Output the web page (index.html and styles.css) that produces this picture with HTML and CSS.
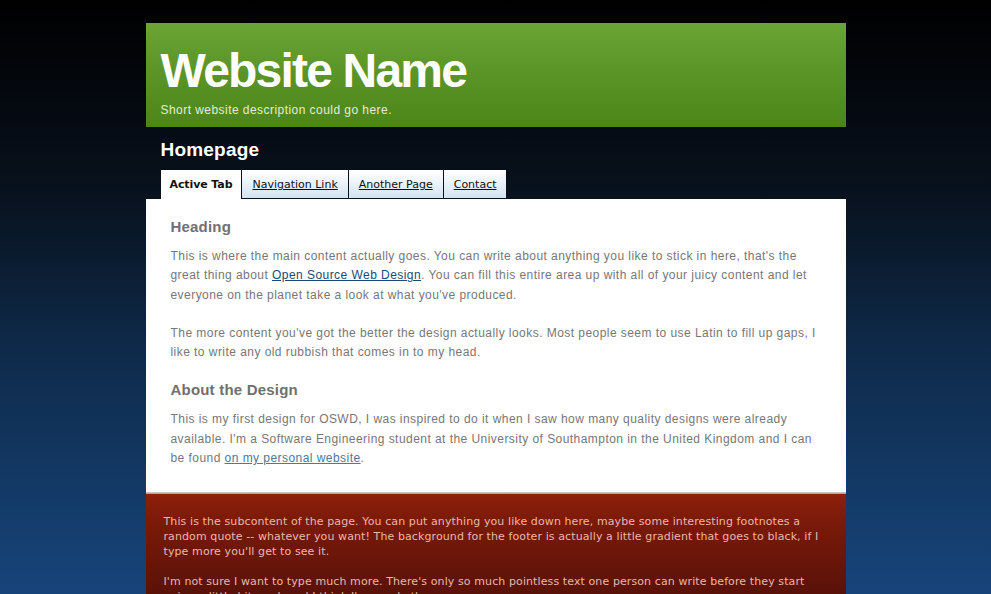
FILE: index.html
```html
<!DOCTYPE html>
<html lang="en">
<head>
<meta charset="utf-8">
<title>Website Name</title>
<link rel="stylesheet" href="styles.css">
</head>
<body>
<div class="page">
  <header class="masthead">
    <h1 class="site-name">Website Name</h1>
    <p class="site-desc">Short website description could go here.</p>
  </header>
  <h2 class="page-title">Homepage</h2>
  <ul class="tabs">
    <li class="tab active"><a href="#">Active Tab</a></li>
    <li class="tab"><a href="#">Navigation Link</a></li>
    <li class="tab"><a href="#">Another Page</a></li>
    <li class="tab"><a href="#">Contact</a></li>
  </ul>
  <main class="content">
    <h3>Heading</h3>
    <p>This is where the main content actually goes. You can write about anything you like to stick in here, that's the great thing about <a class="link" href="#">Open Source Web Design</a>. You can fill this entire area up with all of your juicy content and let everyone on the planet take a look at what you've produced.</p>
    <p>The more content you've got the better the design actually looks. Most people seem to use Latin to fill up gaps, I like to write any old rubbish that comes in to my head.</p>
    <h3>About the Design</h3>
    <p>This is my first design for OSWD, I was inspired to do it when I saw how many quality designs were already available. I'm a Software Engineering student at the University of Southampton in the United Kingdom and I can be found <a class="link visited" href="#">on my personal website</a>.</p>
  </main>
  <footer class="subcontent">
    <p>This is the subcontent of the page. You can put anything you like down here, maybe some interesting footnotes a random quote -- whatever you want! The background for the footer is actually a little gradient that goes to black, if I type more you'll get to see it.</p>
    <p>I'm not sure I want to type much more. There's only so much pointless text one person can write before they start going a little bit mad, and I think I'm nearly there.</p>
  </footer>
</div>
</body>
</html>
```
FILE: styles.css
```css
html, body {
  margin: 0;
  padding: 0;
}
body {
  min-height: 594px;
  background: linear-gradient(#000 0, #050a12 120px, #08131f 200px, #0e2a4a 350px, #143d6c 520px, #16437a 594px);
  background-repeat: no-repeat;
  background-color: #16437a;
  font-family: "Liberation Sans", Arial, sans-serif;
}
.page {
  width: 700px;
  margin: 0 auto;
  padding-top: 23px;
}
.masthead {
  height: 104px;
  box-sizing: border-box;
  padding: 24px 15px 0 15px;
  background: linear-gradient(#6aa535, #5a9326 50%, #4c8619);
}
.site-name {
  margin: 0;
  font-size: 48px;
  line-height: 48px;
  letter-spacing: -1.8px;
  font-weight: bold;
  color: #fff;
}
.site-desc {
  margin: 8px 0 0 0;
  font-size: 12px;
  line-height: 15px;
  letter-spacing: 0.45px;
  color: #e2ecd8;
}
.page-title {
  margin: 11px 15px 9px 15px;
  font-size: 19px;
  line-height: 23px;
  letter-spacing: 0.2px;
  font-weight: bold;
  color: #fff;
}
.tabs {
  display: flex;
  list-style: none;
  margin: 0;
  padding: 0 0 0 15px;
  font-family: "DejaVu Sans", Verdana, sans-serif;
  font-size: 11px;
  line-height: 13px;
}
.tab a {
  display: block;
  padding: 8px 10px 7px 10px;
  color: #111;
  text-decoration: underline;
  background: linear-gradient(#ffffff, #eef5fb 40%, #d3e3f2);
  border-left: 1px solid #08111c;
  border-bottom: 1px solid #08111c;
}
.tab:last-child a {
  padding-right: 9px;
}
.tab.active a {
  font-weight: bold;
  text-decoration: none;
  background: #fff;
  border: 0;
  padding: 8px 9px 8px 9px;
  letter-spacing: -0.1px;
}
.content {
  display: block;
  background: #fff;
  padding: 19px 22px 5px 25px;
  color: #777;
  font-size: 12px;
  line-height: 19.3px;
  letter-spacing: 0.45px;
}
.content h3 {
  margin: 0 0 11px 0;
  font-size: 15px;
  line-height: 18px;
  letter-spacing: 0.2px;
  font-weight: bold;
  color: #707070;
}
.content p {
  margin: 0 0 19px 0;
}
.link {
  color: #1d4a70;
  text-decoration: underline;
}
.link.visited {
  color: #4e7896;
}
.subcontent {
  display: block;
  padding: 22px 18px 40px 18px;
  background: linear-gradient(#cfd4cf 0, #9a9a9a 2px, #8d200b 2px, #7a1a09 30px, #5a1208 100px, #300704 200px);
  font-family: "DejaVu Sans", Verdana, sans-serif;
  font-size: 11px;
  line-height: 15px;
  letter-spacing: 0.1px;
  color: #e9b7a8;
}
.subcontent p {
  margin: 0 0 15px 0;
}
```
